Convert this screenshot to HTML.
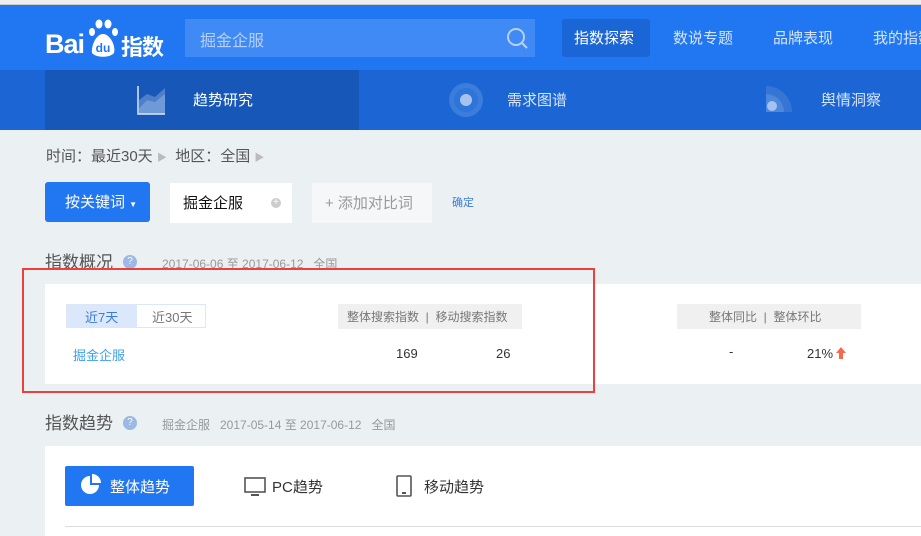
<!DOCTYPE html>
<html><head><meta charset="utf-8"><style>
*{margin:0;padding:0;box-sizing:border-box}
body{width:921px;height:536px;overflow:hidden;background:#ebf0f3;font-family:"Liberation Sans","Noto Sans CJK SC",sans-serif;position:relative}
.a{position:absolute}
.t{white-space:nowrap}
</style></head><body>
<div class="a" style="left:0;top:0;width:921px;height:5px;background:#eee;border-bottom:1px solid #ccc"></div>
<div class="a" style="left:0;top:5px;width:921px;height:65px;background:#2177f1"></div>
<!-- logo -->
<div class="a t" style="left:45px;top:29px;color:#fff;font-size:27px;font-weight:bold;letter-spacing:-1px">Bai</div>
<svg class="a" style="left:86px;top:16px" width="34" height="42" viewBox="0 0 34 42">
<ellipse cx="6" cy="16" rx="3" ry="4" fill="#fff"/><ellipse cx="13" cy="8" rx="3.5" ry="4.5" fill="#fff"/><ellipse cx="22" cy="8" rx="3.5" ry="4.5" fill="#fff"/><ellipse cx="29" cy="16" rx="3" ry="4" fill="#fff"/>
<path d="M17 18 C10 18 5 30 6 37 C10 42 24 42 28 37 C30 30 24 18 17 18Z" fill="#fff"/>
<text x="17" y="36" fill="#2177f1" font-size="12" font-weight="bold" text-anchor="middle" font-family="Liberation Sans">du</text></svg>
<div class="a t" style="left:121px;top:30px;color:#fff;font-size:22px;font-weight:bold;letter-spacing:-1px">指数</div>
<div class="a" style="left:185px;top:19px;width:350px;height:38px;background:#3f8af4"></div>
<div class="a t" style="left:200px;top:27px;color:#b6d0f8;font-size:16px">掘金企服</div>
<svg class="a" style="left:506px;top:27px" width="24" height="24"><circle cx="10" cy="10" r="8" fill="none" stroke="#b6d0f8" stroke-width="2"/><line x1="16" y1="16" x2="21" y2="21" stroke="#b6d0f8" stroke-width="2"/></svg>
<div class="a" style="left:562px;top:19px;width:88px;height:38px;background:#1b66d6;border-radius:3px"></div>
<div class="a t" style="left:574px;top:27px;color:#fff;font-size:15px">指数探索</div>
<div class="a t" style="left:673px;top:27px;color:#d6e4fb;font-size:15px">数说专题</div>
<div class="a t" style="left:773px;top:27px;color:#d6e4fb;font-size:15px">品牌表现</div>
<div class="a t" style="left:873px;top:27px;color:#d6e4fb;font-size:15px">我的指数</div>
<!-- subnav -->
<div class="a" style="left:0;top:70px;width:921px;height:60px;background:#1b66d4"></div>
<div class="a" style="left:45px;top:70px;width:314px;height:60px;background:#1757b7"></div>
<svg class="a" style="left:137px;top:86px" width="30" height="30"><path d="M2 22 L10 14 L18 16 L28 6 L28 28 L2 28Z" fill="#6f9ad8"/><path d="M2 14 L10 8 L18 11 L28 2 L28 8 L18 16 L10 14 L2 22Z" fill="#4f7fc8"/><path d="M1 0 V28 H28" fill="none" stroke="#dfe8f6" stroke-width="1.5"/></svg>
<div class="a t" style="left:193px;top:89px;color:#fff;font-size:15px">趋势研究</div>
<svg class="a" style="left:448px;top:82px" width="36" height="36"><circle cx="18" cy="18" r="17" fill="#3b7ddb"/><circle cx="18" cy="18" r="12" fill="#2f74d8"/><circle cx="18" cy="18" r="6" fill="#a6c3ef"/></svg>
<div class="a t" style="left:507px;top:89px;color:#d6e4fb;font-size:15px">需求图谱</div>
<svg class="a" style="left:766px;top:86px" width="28" height="28"><path d="M0 0 A26 26 0 0 1 26 26 H0Z" fill="#3775d4"/><path d="M0 8 A18 18 0 0 1 18 26 H0Z" fill="#4d88dc"/><circle cx="6" cy="20" r="5" fill="#a6c3ef"/></svg>
<div class="a t" style="left:821px;top:89px;color:#d6e4fb;font-size:15px">舆情洞察</div>
<!-- filters -->
<div class="a t" style="left:46px;top:145px;color:#555;font-size:15px">时间：最近30天 <span style="color:#bbb;font-size:10px">▶</span>&nbsp; 地区：全国 <span style="color:#bbb;font-size:10px">▶</span></div>
<div class="a" style="left:45px;top:182px;width:105px;height:40px;background:#2177f1;border-radius:3px"></div>
<div class="a t" style="left:65px;top:191px;color:#fff;font-size:15px">按关键词 <span style="font-size:8px">▼</span></div>
<div class="a" style="left:170px;top:183px;width:122px;height:40px;background:#fff"></div>
<div class="a t" style="left:183px;top:192px;color:#111;font-size:15px">掘金企服</div>
<div class="a" style="left:271px;top:198px;width:10px;height:10px;border-radius:50%;background:#ccc;color:#fff;font-size:10px;line-height:10px;text-align:center">+</div>
<div class="a" style="left:312px;top:183px;width:120px;height:40px;background:#f5f7f9"></div>
<div class="a t" style="left:325px;top:192px;color:#999;font-size:15px">+ 添加对比词</div>
<div class="a t" style="left:452px;top:194px;color:#3b7bd8;font-size:11px">确定</div>
<!-- overview -->
<div class="a t" style="left:45px;top:248px;color:#555;font-size:17px">指数概况</div>
<div class="a" style="left:123px;top:255px;width:14px;height:14px;border-radius:50%;background:#9bb9e4;color:#fff;font-size:10px;text-align:center;line-height:14px">?</div>
<div class="a t" style="left:162px;top:255px;color:#999;font-size:12px">2017-06-06 至 2017-06-12 &nbsp; 全国</div>
<div class="a" style="left:45px;top:284px;width:876px;height:100px;background:#fff"></div>
<div class="a" style="left:66px;top:304px;width:140px;height:24px;border:1px solid #dbe6f7;background:#fff"></div>
<div class="a" style="left:67px;top:305px;width:70px;height:22px;background:#dbe7fa"></div>
<div class="a t" style="left:85px;top:307px;color:#3b7bd8;font-size:13px">近7天</div>
<div class="a t" style="left:152px;top:307px;color:#777;font-size:13px">近30天</div>
<div class="a" style="left:338px;top:304px;width:184px;height:25px;background:#f0f0f0"></div>
<div class="a t" style="left:347px;top:308px;color:#777;font-size:12px">整体搜索指数 &nbsp;| &nbsp;移动搜索指数</div>
<div class="a" style="left:677px;top:304px;width:184px;height:25px;background:#f0f0f0"></div>
<div class="a t" style="left:709px;top:308px;color:#777;font-size:12px">整体同比 &nbsp;| &nbsp;整体环比</div>
<div class="a t" style="left:73px;top:345px;color:#3ba2e8;font-size:13px">掘金企服</div>
<div class="a t" style="left:396px;top:346px;color:#333;font-size:13px">169</div>
<div class="a t" style="left:496px;top:346px;color:#333;font-size:13px">26</div>
<div class="a t" style="left:729px;top:344px;color:#333;font-size:13px">-</div>
<div class="a t" style="left:807px;top:346px;color:#333;font-size:13px">21%</div>
<svg class="a" style="left:835px;top:347px" width="12" height="12"><path d="M6 0 L11 6 H8 V12 H4 V6 H1Z" fill="#f46a4c"/></svg>
<div class="a" style="left:22px;top:268px;width:573px;height:125px;border:2px solid #f03e3e"></div>
<!-- trend -->
<div class="a t" style="left:45px;top:409px;color:#555;font-size:17px">指数趋势</div>
<div class="a" style="left:123px;top:416px;width:14px;height:14px;border-radius:50%;background:#9bb9e4;color:#fff;font-size:10px;text-align:center;line-height:14px">?</div>
<div class="a t" style="left:162px;top:416px;color:#999;font-size:12px">掘金企服 &nbsp; 2017-05-14 至 2017-06-12 &nbsp; 全国</div>
<div class="a" style="left:45px;top:446px;width:876px;height:90px;background:#fff"></div>
<div class="a" style="left:65px;top:466px;width:129px;height:40px;background:#2177f1;border-radius:2px"></div>
<svg class="a" style="left:80px;top:474px" width="22" height="22"><path d="M10 2 A9 9 0 1 0 19 11 H10Z" fill="#fff"/><path d="M12 0 A9 9 0 0 1 21 9 H12Z" fill="#fff"/></svg>
<div class="a t" style="left:110px;top:476px;color:#fff;font-size:15px">整体趋势</div>
<svg class="a" style="left:244px;top:477px" width="22" height="20"><rect x="1" y="1" width="20" height="14" fill="none" stroke="#555" stroke-width="1.6"/><rect x="7" y="17" width="8" height="2" fill="#555"/></svg>
<div class="a t" style="left:272px;top:476px;color:#333;font-size:15px">PC趋势</div>
<svg class="a" style="left:396px;top:475px" width="16" height="22"><rect x="1" y="1" width="14" height="20" rx="1" fill="none" stroke="#555" stroke-width="1.6"/><rect x="6" y="17" width="4" height="2" fill="#555"/></svg>
<div class="a t" style="left:424px;top:476px;color:#333;font-size:15px">移动趋势</div>
<div class="a" style="left:65px;top:526px;width:856px;height:1px;background:#ddd"></div>
</body></html>
